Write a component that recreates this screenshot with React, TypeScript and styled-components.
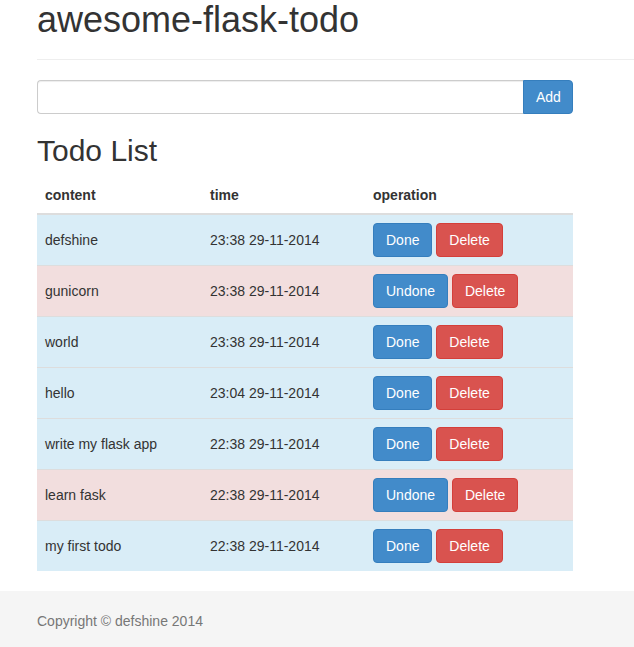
import styled, { createGlobalStyle } from "styled-components";

interface Todo {
  content: string;
  time: string;
  done: boolean;
}

const todos: Todo[] = [
  { content: "defshine", time: "23:38 29-11-2014", done: false },
  { content: "gunicorn", time: "23:38 29-11-2014", done: true },
  { content: "world", time: "23:38 29-11-2014", done: false },
  { content: "hello", time: "23:04 29-11-2014", done: false },
  { content: "write my flask app", time: "22:38 29-11-2014", done: false },
  { content: "learn fask", time: "22:38 29-11-2014", done: true },
  { content: "my first todo", time: "22:38 29-11-2014", done: false },
];

const GlobalStyle = createGlobalStyle`
  * {
    box-sizing: border-box;
  }
  html, body {
    margin: 0;
    padding: 0;
  }
  body {
    font-family: "Liberation Sans", Arial, Helvetica, sans-serif;
    font-size: 14px;
    line-height: 1.42857143;
    color: #333;
    background: #fff;
  }
`;

const App: React.FC = () => {
  return (
    <>
      <GlobalStyle />
      <Wrap>
        <Container>
          <PageHeader>
            <Title>awesome-flask-todo</Title>
          </PageHeader>
          <Main>
            <AddForm onSubmit={(e) => e.preventDefault()}>
              <Input type="text" />
              <AddButton type="submit">Add</AddButton>
            </AddForm>
            <SubTitle>Todo List</SubTitle>
            <Table>
              <thead>
                <tr>
                  <Th style={{ width: 165 }}>content</Th>
                  <Th style={{ width: 163 }}>time</Th>
                  <Th>operation</Th>
                </tr>
              </thead>
              <tbody>
                {todos.map((todo) => (
                  <Row key={todo.content} done={todo.done}>
                    <Td>{todo.content}</Td>
                    <Td>{todo.time}</Td>
                    <Td>
                      <Btn variant="primary">{todo.done ? "Undone" : "Done"}</Btn>{" "}
                      <Btn variant="danger">Delete</Btn>
                    </Td>
                  </Row>
                ))}
              </tbody>
            </Table>
          </Main>
        </Container>
        <Footer>
          <FooterText>Copyright © defshine 2014</FooterText>
        </Footer>
      </Wrap>
    </>
  );
};

const Wrap = styled.div`
  min-height: 100vh;
  display: flex;
  flex-direction: column;
`;

const Container = styled.div`
  padding-left: 37px;
  flex: 1;
`;

const PageHeader = styled.div`
  padding-bottom: 9px;
  margin: 0 0 20px;
  border-bottom: 1px solid #eee;
`;

const Title = styled.h1`
  margin: 0 0 10px;
  font-size: 36px;
  font-weight: 500;
  line-height: 1.1;
`;

const Main = styled.div`
  width: 536px;
`;

const AddForm = styled.form`
  display: flex;
  margin: 0;
`;

const Input = styled.input`
  flex: 1;
  height: 34px;
  padding: 6px 12px;
  font: inherit;
  color: #555;
  background: #fff;
  border: 1px solid #ccc;
  border-right: 0;
  border-radius: 4px 0 0 4px;
  box-shadow: inset 0 1px 1px rgba(0, 0, 0, 0.075);
  outline: none;
`;

const AddButton = styled.button`
  width: 50px;
  height: 34px;
  padding: 6px 12px;
  font: inherit;
  color: #fff;
  background: #428bca;
  border: 1px solid #357ebd;
  border-radius: 0 4px 4px 0;
  cursor: pointer;
`;

const SubTitle = styled.h2`
  margin: 20px 0 10px;
  font-size: 30px;
  font-weight: 500;
  line-height: 1.1;
`;

const Table = styled.table`
  width: 100%;
  border-collapse: collapse;
  border-spacing: 0;
  margin-bottom: 20px;
`;

const Th = styled.th`
  text-align: left;
  padding: 8px;
  line-height: 20px;
  font-weight: bold;
  border-bottom: 2px solid #ddd;
  vertical-align: bottom;
`;

interface RowProps {
  done: boolean;
}

const Row = styled.tr<RowProps>`
  background: ${(props) => (props.done ? "#f2dede" : "#d9edf7")};
`;

const Td = styled.td`
  padding: 8px;
  line-height: 20px;
  vertical-align: middle;
  border-top: 1px solid #ddd;
`;

interface BtnProps {
  variant: "primary" | "danger";
}

const Btn = styled.button<BtnProps>`
  display: inline-block;
  padding: 6px 12px;
  font: inherit;
  line-height: 20px;
  color: #fff;
  background: ${(props) => (props.variant === "primary" ? "#428bca" : "#d9534f")};
  border: 1px solid
    ${(props) => (props.variant === "primary" ? "#357ebd" : "#d43f3a")};
  border-radius: 4px;
  cursor: pointer;
`;

const Footer = styled.footer`
  height: 60px;
  background: #f5f5f5;
  padding-left: 37px;
`;

const FooterText = styled.p`
  margin: 20px 0;
  color: #777;
`;

export default App;
